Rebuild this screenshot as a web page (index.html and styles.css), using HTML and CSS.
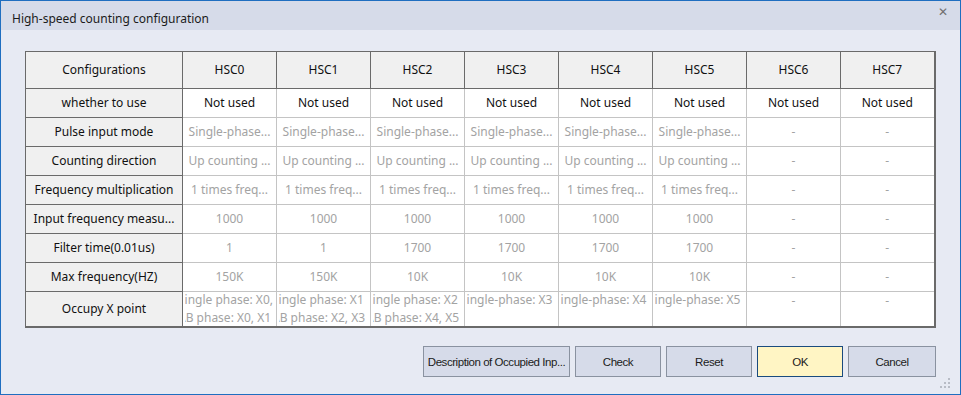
FILE: index.html
```html
<!DOCTYPE html>
<html>
<head>
<meta charset="utf-8">
<link rel="stylesheet" href="styles.css">
</head>
<body>
<div class="window">
  <div class="titlebar">
    <span class="title">High-speed counting configuration</span>
    <span class="close">&#x2715;</span>
  </div>
  <div class="content">
    <table class="grid">
      <colgroup>
        <col class="c-head"><col class="c"><col class="c"><col class="c"><col class="c"><col class="c"><col class="c"><col class="c"><col class="c-last">
      </colgroup>
      <thead>
        <tr class="hrow">
          <th class="rh">Configurations</th><th>HSC0</th><th>HSC1</th><th>HSC2</th><th>HSC3</th><th>HSC4</th><th>HSC5</th><th>HSC6</th><th>HSC7</th>
        </tr>
      </thead>
      <tbody>
        <tr><th class="rh">whether to use</th><td class="on">Not used</td><td class="on">Not used</td><td class="on">Not used</td><td class="on">Not used</td><td class="on">Not used</td><td class="on">Not used</td><td class="on">Not used</td><td class="on">Not used</td></tr>
        <tr><th class="rh">Pulse input mode</th><td>Single-phase...</td><td>Single-phase...</td><td>Single-phase...</td><td>Single-phase...</td><td>Single-phase...</td><td>Single-phase...</td><td>-</td><td>-</td></tr>
        <tr><th class="rh">Counting direction</th><td>Up counting ...</td><td>Up counting ...</td><td>Up counting ...</td><td>Up counting ...</td><td>Up counting ...</td><td>Up counting ...</td><td>-</td><td>-</td></tr>
        <tr><th class="rh">Frequency multiplication</th><td>1 times freq...</td><td>1 times freq...</td><td>1 times freq...</td><td>1 times freq...</td><td>1 times freq...</td><td>1 times freq...</td><td>-</td><td>-</td></tr>
        <tr><th class="rh">Input frequency measu...</th><td>1000</td><td>1000</td><td>1000</td><td>1000</td><td>1000</td><td>1000</td><td>-</td><td>-</td></tr>
        <tr><th class="rh">Filter time(0.01us)</th><td>1</td><td>1</td><td>1700</td><td>1700</td><td>1700</td><td>1700</td><td>-</td><td>-</td></tr>
        <tr><th class="rh">Max frequency(HZ)</th><td>150K</td><td>150K</td><td>10K</td><td>10K</td><td>10K</td><td>10K</td><td>-</td><td>-</td></tr>
        <tr class="lastrow"><th class="rh">Occupy X point</th>
          <td class="occ"><div class="clip"><div class="lines">Single phase: X0, X1<br>AB phase: X0, X1</div></div></td>
          <td class="occ"><div class="clip"><div class="lines">Single phase: X1<br>AB phase: X2, X3</div></div></td>
          <td class="occ"><div class="clip"><div class="lines">Single phase: X2<br>AB phase: X4, X5</div></div></td>
          <td class="occ"><div class="clip"><div class="lines">Single-phase: X3</div></div></td>
          <td class="occ"><div class="clip"><div class="lines">Single-phase: X4</div></div></td>
          <td class="occ"><div class="clip"><div class="lines">Single-phase: X5</div></div></td>
          <td class="occ dash">-</td>
          <td class="occ dash">-</td>
        </tr>
      </tbody>
    </table>
    <div class="buttons">
      <button class="btn wide">Description of Occupied Inp...</button>
      <button class="btn">Check</button>
      <button class="btn">Reset</button>
      <button class="btn ok">OK</button>
      <button class="btn cancel">Cancel</button>
    </div>
  </div>
  <svg class="grip" width="10" height="10" viewBox="0 0 10 10">
    <rect x="8" y="0" width="2" height="2" fill="#b8bcc6"/>
    <rect x="4" y="4" width="2" height="2" fill="#b8bcc6"/>
    <rect x="8" y="4" width="2" height="2" fill="#b8bcc6"/>
    <rect x="0" y="8" width="2" height="2" fill="#b8bcc6"/>
    <rect x="4" y="8" width="2" height="2" fill="#b8bcc6"/>
    <rect x="8" y="8" width="2" height="2" fill="#b8bcc6"/>
  </svg>
</div>
</body>
</html>
```

FILE: styles.css
```css
html, body {
  margin: 0;
  padding: 0;
}
body {
  width: 961px;
  height: 395px;
  overflow: hidden;
  background: #e7eaf3;
}
.window {
  position: relative;
  box-sizing: border-box;
  width: 961px;
  height: 395px;
  border: 1px solid #1f6ec0;
  background: #e7eaf3;
  font-family: "Noto Sans", "Liberation Sans", sans-serif;
}
.titlebar {
  box-sizing: border-box;
  height: 29px;
  background: #d6dbe9;
  display: flex;
  align-items: flex-start;
  justify-content: space-between;
  padding: 0 12px 0 11px;
}
.title {
  font-size: 12px;
  color: #1b1b1b;
  margin-top: 9px;
  line-height: 17px;
}
.close {
  font-size: 12px;
  color: #707070;
  margin-top: 3px;
  line-height: 16px;
}
.content {
  padding: 21px 24px 0 24px;
}
.grid {
  border-collapse: collapse;
  table-layout: fixed;
  width: 910px;
  border-top: 1px solid #6a6a6a;
  border-left: 1px solid #6a6a6a;
  border-right: 2px solid #6a6a6a;
  border-bottom: 2px solid #6a6a6a;
  font-size: 12px;
}
.c-head { width: 157px; }
.c { width: 94px; }
.c-last { width: 94px; }
th, td {
  padding: 0;
  text-align: center;
  white-space: nowrap;
  overflow: hidden;
  height: 28px;
  line-height: 16px;
}
th {
  background: #f0f0f0;
  font-weight: normal;
  color: #111;
  border: 1px solid #6a6a6a;
}
.hrow th {
  height: 36px;
}
td {
  background: #fff;
  color: #a3a3a3;
  border: 1px solid #c4c4c4;
}
td.on {
  color: #111;
}
.lastrow th, .lastrow td {
  height: 33px;
}
td.occ {
  vertical-align: top;
}
td.dash {
  padding-top: 1px;
}
.clip {
  width: 90px;
  height: 33px;
  margin-left: 2px;
  overflow: hidden;
}
.lines {
  margin-left: -7px;
  margin-top: -1px;
  text-align: left;
  line-height: 18px;
}
.buttons {
  display: flex;
  justify-content: flex-end;
  gap: 5px;
  margin-top: 18px;
}
.btn {
  height: 31px;
  width: 86px;
  background: #d6dbe9;
  border: 1px solid #8a92a0;
  font-family: "Liberation Sans", sans-serif;
  font-size: 11.5px;
  letter-spacing: -0.45px;
  white-space: nowrap;
  overflow: hidden;
  color: #1b1b1b;
  padding: 0;
}
.btn.wide {
  width: 147px;
}
.btn.cancel {
  width: 88px;
}
.btn.ok {
  background: #fff5c4;
  border-color: #1a4b7e;
}
.grip {
  position: absolute;
  right: 10px;
  bottom: 6px;
}
```
